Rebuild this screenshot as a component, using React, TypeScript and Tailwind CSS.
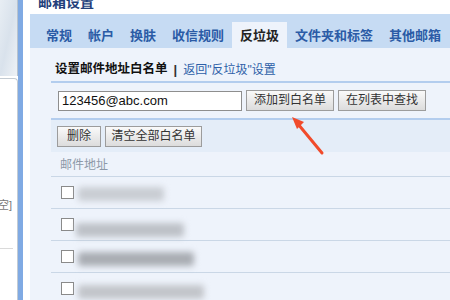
import React from 'react';

const tabs = ['常规', '帐户', '换肤', '收信规则', '反垃圾', '文件夹和标签', '其他邮箱'];

const font = { fontFamily: '"Liberation Sans", "Noto Sans CJK SC", sans-serif' };

function Btn({ children, className = '' }: { children: React.ReactNode; className?: string }) {
  return (
    <button
      className={`h-[21px] border border-[#9c9c9c] bg-gradient-to-b from-[#fafafa] to-[#dcdcdc] text-[12px] leading-[19px] text-[#333] ${className}`}
    >
      {children}
    </button>
  );
}

const rows = [
  { w: 'w-[86px]', ml: 'ml-[4px]', c: 'bg-[#c9cdd3]', top: 'mt-[2px]' },
  { w: 'w-[108px]', ml: 'ml-[2px]', c: 'bg-[#bdc1c7]', top: 'mt-[10px]' },
  { w: 'w-[116px]', ml: 'ml-[4px]', c: 'bg-[#a9adb3]', top: 'mt-[4px]' },
  { w: 'w-[126px]', ml: 'ml-[4px]', c: 'bg-[#c2c5ca]', top: 'mt-[6px]' },
];

export default function App() {
  return (
    <div className="relative w-[450px] h-[300px] overflow-hidden bg-white flex" style={font}>
      {/* left column */}
      <div className="w-[18px] shrink-0 flex flex-col">
        <div className="h-[76px] shrink-0 bg-gradient-to-br from-[#e8eef4] via-[#d9e2ec] to-[#eef2f6] border-r border-[#b8c3ce]" />
        <div className="flex-1 mt-[2px] bg-white border-r border-t border-[#c3cbd3] rounded-tr-[4px] flex flex-col">
          <div className="mt-[118px] text-[11px] text-[#777] -ml-[2px] whitespace-nowrap">空]</div>
          <div className="mt-[34px] mr-[4px] h-px bg-[#dadada]" />
        </div>
      </div>
      <div className="w-[5px] shrink-0 bg-[#80aae3]" />
      <div className="w-[7px] shrink-0 bg-white" />

      {/* main */}
      <div className="flex-1 min-w-0 flex flex-col">
        <div className="h-[14px] shrink-0 overflow-hidden bg-white">
          <div className="-mt-[8px] pl-[8px] text-[14px] font-bold leading-[20px] text-[#23407a]">邮箱设置</div>
        </div>
        <div className="h-[34px] shrink-0 bg-[#c6dbf3] flex items-end pl-[8px]">
          {tabs.map((t) => (
            <div
              key={t}
              className={`h-[26px] px-[8px] pt-[2px] flex items-center text-[13px] font-bold whitespace-nowrap ${
                t === '反垃圾' ? 'bg-[#eef3fb] text-[#222]' : 'text-[#2b5ba6]'
              }`}
            >
              {t}
            </div>
          ))}
        </div>
        <div className="flex-1 min-h-0 overflow-hidden bg-[#eef3fb] pl-[21px] flex flex-col">
          <div className="h-[35px] shrink-0 flex items-center border-b-2 border-[#b3cdee] pl-[4px] pt-[10px] whitespace-nowrap">
            <span className="text-[12.5px] font-bold text-[#111]">设置邮件地址白名单</span>
            <span className="mx-[6px] text-[13px] font-bold text-[#333]">|</span>
            <span className="text-[12px] text-[#2d5fa8]">返回"反垃圾"设置</span>
          </div>
          <div className="h-[37px] shrink-0 flex items-center gap-[4px] pl-[7px] border-b-2 border-[#b3cdee]">
            <div className="w-[184px] h-[20px] bg-white border border-[#8e8e8e] flex items-center pl-[3px] text-[13px] text-[#111]">
              123456@abc.com
            </div>
            <Btn className="w-[88px]">添加到白名单</Btn>
            <Btn className="w-[88px]">在列表中查找</Btn>
          </div>
          <div className="h-[32px] shrink-0 bg-[#e4edf8] flex items-center gap-[4px] pl-[6px]">
            <Btn className="w-[44px]">删除</Btn>
            <Btn className="w-[97px]">清空全部白名单</Btn>
          </div>
          <div className="h-[25px] shrink-0 flex items-center pl-[9px] pt-[2px] border-b border-[#cad7e6] text-[12px] text-[#8d99a8]">
            邮件地址
          </div>
          {rows.map((r, i) => (
            <div key={i} className="h-[32px] shrink-0 flex items-center pl-[10px] border-b border-[#cad7e6]">
              <div className="w-[13px] h-[13px] bg-white border border-[#8a8a8a]" />
              <div className={`${r.ml} ${r.top} ${r.w} h-[14px] ${r.c} blur-[3px] rounded-[3px]`} />
            </div>
          ))}
        </div>
      </div>

      {/* red arrow annotation */}
      <svg className="absolute left-0 top-0" width="450" height="300" viewBox="0 0 450 300">
        <line x1="322" y1="153" x2="298" y2="124" stroke="#f14b2b" strokeWidth="3" strokeLinecap="round" />
        <polygon points="292,117 304,122 297,129" fill="#f14b2b" />
      </svg>
    </div>
  );
}
